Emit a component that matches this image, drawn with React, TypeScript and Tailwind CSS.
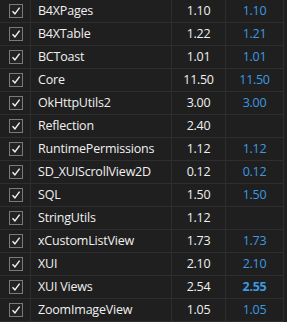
import React from "react";

const rows: [string, string, string, boolean?][] = [
  ["B4XPages", "1.10", "1.10"],
  ["B4XTable", "1.22", "1.21"],
  ["BCToast", "1.01", "1.01"],
  ["Core", "11.50", "11.50"],
  ["OkHttpUtils2", "3.00", "3.00"],
  ["Reflection", "2.40", ""],
  ["RuntimePermissions", "1.12", "1.12"],
  ["SD_XUIScrollView2D", "0.12", "0.12"],
  ["SQL", "1.50", "1.50"],
  ["StringUtils", "1.12", ""],
  ["xCustomListView", "1.73", "1.73"],
  ["XUI", "2.10", "2.10"],
  ["XUI Views", "2.54", "2.55", true],
  ["ZoomImageView", "1.05", "1.05"],
];

function Check() {
  return (
    <div className="w-[14px] h-[14px] border border-[#7a7a7a] bg-[#232323] flex items-center justify-center">
      <svg width="10" height="10" viewBox="0 0 10 10">
        <path d="M1.5 5.3 L3.9 7.8 L8.6 1.6" stroke="#f2f2f2" strokeWidth="1.4" fill="none" />
      </svg>
    </div>
  );
}

export default function App() {
  return (
    <div
      className="w-[287px] h-[322px] bg-[#1f1f1f] text-[#f0f0f0] overflow-hidden"
      style={{ fontFamily: '"Open Sans", "Noto Sans", sans-serif' }}
    >
      {rows.map(([name, ver, latest, bold], i) => (
        <div key={i} className="flex h-[23px] border-b border-[#2e2e2e] w-[284px] border-r">
          <div className="w-[31px] border-r border-[#2e2e2e] flex items-center justify-center pl-[1px]">
            <Check />
          </div>
          <div className="w-[141px] border-r border-[#2e2e2e] flex items-center pl-[7px] text-[12.5px] whitespace-nowrap overflow-hidden tracking-[-0.2px]">
            {name}
          </div>
          <div className="w-[54px] border-r border-[#2e2e2e] flex items-center justify-center text-[12.5px] tracking-[-0.3px]">
            {ver}
          </div>
          <div
            className={
              "flex-1 flex items-center justify-center text-[12.5px] text-[#3c9ae0] tracking-[-0.3px] " +
              (bold ? "font-bold" : "")
            }
          >
            {latest}
          </div>
        </div>
      ))}
    </div>
  );
}
